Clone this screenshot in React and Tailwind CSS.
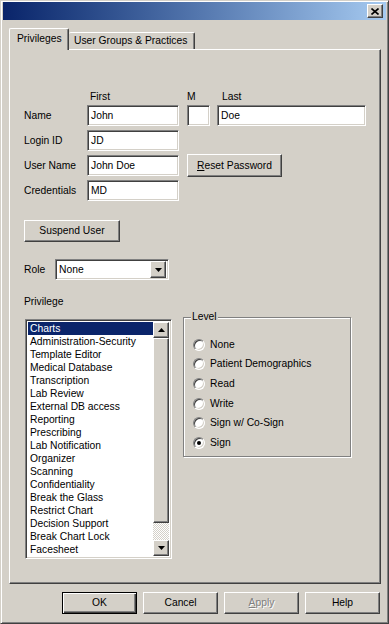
import React from "react";

const sunken =
  "bg-white border border-t-[#808080] border-l-[#808080] border-b-white border-r-white shadow-[inset_1px_1px_0_#404040,inset_-1px_-1px_0_#d4d0c8]";
const raised =
  "bg-[#d4d0c8] border border-t-white border-l-white border-r-[#404040] border-b-[#404040] shadow-[inset_-1px_-1px_0_#808080]";

function Field({ cls, children }) {
  return (
    <div className={`h-[21px] flex items-center pl-[3px] whitespace-nowrap overflow-hidden ${sunken} ${cls}`}>
      {children}
    </div>
  );
}

function Radio({ label, checked }) {
  return (
    <div className="flex items-center h-[19.6px]">
      <div className="w-[12px] h-[12px] rounded-full bg-white border border-t-[#808080] border-l-[#808080] border-b-white border-r-white shadow-[inset_1px_1px_0_#404040,inset_-1px_-1px_0_#d4d0c8] flex items-center justify-center">
        {checked && <div className="w-[4px] h-[4px] rounded-full bg-black" />}
      </div>
      <span className="ml-[5px]">{label}</span>
    </div>
  );
}

function ArrowBtn({ down, cls }) {
  return (
    <div className={`flex items-center justify-center ${raised} ${cls}`}>
      <svg width="7" height="4" viewBox="0 0 7 4">
        {down ? <polygon points="0,0 7,0 3.5,4" fill="#000" /> : <polygon points="0,4 7,4 3.5,0" fill="#000" />}
      </svg>
    </div>
  );
}

const items = [
  "Charts",
  "Administration-Security",
  "Template Editor",
  "Medical Database",
  "Transcription",
  "Lab Review",
  "External DB access",
  "Reporting",
  "Prescribing",
  "Lab Notification",
  "Organizer",
  "Scanning",
  "Confidentiality",
  "Break the Glass",
  "Restrict Chart",
  "Decision Support",
  "Break Chart Lock",
  "Facesheet",
  "Performance Measure Mgr",
];

export default function App() {
  return (
    <div className="w-[389px] h-[624px] bg-[#d4d0c8] border border-t-[#d4d0c8] border-l-[#d4d0c8] border-r-[#404040] border-b-[#404040] shadow-[inset_1px_1px_0_#fff,inset_-1px_-1px_0_#808080] pt-[1px] px-[2px] flex flex-col text-[10.3px] leading-[12px] text-black font-['Liberation_Sans',Arial,sans-serif]">
      {/* Title bar */}
      <div className="h-[18px] bg-gradient-to-r from-[#0a246a] to-[#a6caf0] flex items-center justify-end pr-[3px] shrink-0">
        <div className={`w-[16px] h-[14px] flex items-center justify-center ${raised}`}>
          <svg width="8" height="7" viewBox="0 0 8 7">
            <path d="M0.5 0.5 L7.5 6.5 M7.5 0.5 L0.5 6.5" stroke="#000" strokeWidth="1.6" />
          </svg>
        </div>
      </div>

      {/* Tabs */}
      <div className="mt-[8px] ml-[6px] h-[21px] flex items-end shrink-0">
        <div className="relative z-10 -mb-[1px] h-[22px] w-[60px] bg-[#d4d0c8] border-t border-l border-r border-t-white border-l-white border-r-[#404040] shadow-[inset_-1px_0_0_#808080] rounded-t-[2px] flex items-center pl-[7px] pb-[1px]">
          Privileges
        </div>
        <div className="h-[17px] w-[126px] border-t border-r border-t-white border-r-[#404040] shadow-[inset_-1px_0_0_#808080] rounded-t-[2px] flex items-center pl-[5px]">
          User Groups &amp; Practices
        </div>
      </div>

      {/* Panel */}
      <div className="ml-[6px] w-[372px] h-[535px] shrink-0 border border-t-white border-l-white border-r-[#404040] border-b-[#404040] shadow-[inset_-1px_-1px_0_#808080] pl-[14px] pt-[41px] flex flex-col">
        {/* header labels */}
        <div className="flex h-[12px] items-center">
          <div className="w-[66px]" />
          <div className="w-[97px]">First</div>
          <div className="w-[35px]">M</div>
          <div>Last</div>
        </div>
        {/* Name */}
        <div className="mt-[2px] flex items-center h-[21px]">
          <div className="w-[63px]">Name</div>
          <Field cls="w-[92px]">John</Field>
          <Field cls="w-[23px] ml-[8px]" />
          <Field cls="w-[149px] ml-[7px]">Doe</Field>
        </div>
        {/* Login ID */}
        <div className="mt-[4px] flex items-center h-[21px]">
          <div className="w-[63px]">Login ID</div>
          <Field cls="w-[92px]">JD</Field>
        </div>
        {/* User Name */}
        <div className="mt-[4px] flex items-center h-[21px]">
          <div className="w-[63px]">User Name</div>
          <Field cls="w-[92px]">John Doe</Field>
          <div className={`ml-[8px] w-[95px] h-[23px] flex items-center justify-center ${raised}`}>
            <span>
              <span className="underline">R</span>eset Password
            </span>
          </div>
        </div>
        {/* Credentials */}
        <div className="mt-[4px] flex items-center h-[21px]">
          <div className="w-[63px]">Credentials</div>
          <Field cls="w-[92px]">MD</Field>
        </div>

        {/* Suspend User */}
        <div className={`mt-[19px] w-[96px] h-[22px] flex items-center justify-center ${raised}`}>Suspend User</div>

        {/* Role */}
        <div className="mt-[17px] flex items-center h-[21px]">
          <div className="w-[31px]">Role</div>
          <div className={`w-[114px] h-[21px] flex items-center justify-between pl-[3px] pr-[2px] ${sunken}`}>
            <span>None</span>
            <ArrowBtn down cls="w-[16px] h-[17px]" />
          </div>
        </div>

        {/* Privilege label */}
        <div className="mt-[16px] h-[12px] flex items-center">Privilege</div>

        {/* List + Level */}
        <div className="mt-[3px] flex items-start">
          <div className={`mt-[8px] ml-[1px] w-[147px] h-[240px] flex p-[2px] ${sunken}`}>
            <div className="flex-1 min-w-0 h-full overflow-hidden">
              {items.map((it, i) => (
                <div
                  key={it}
                  className={`h-[13px] flex items-center pl-[2px] whitespace-nowrap ${i === 0 ? "bg-[#0a246a] text-white" : ""}`}
                >
                  {it}
                </div>
              ))}
            </div>
            <div className="w-[16px] h-full flex flex-col shrink-0">
              <ArrowBtn cls="w-[16px] h-[16px] shrink-0" />
              <div className={`w-[16px] h-[185px] shrink-0 ${raised}`} />
              <div className="flex-1 bg-[repeating-conic-gradient(#ffffff_0_25%,#d4d0c8_0_50%)] bg-size-[2px_2px]" />
              <ArrowBtn down cls="w-[16px] h-[16px] shrink-0" />
            </div>
          </div>

          <fieldset className="ml-[11px] w-[168px] min-w-0 border border-[#808080] shadow-[1px_1px_0_#fff,inset_1px_1px_0_#fff] px-[9px] pb-[3px]">
            <legend className="-ml-[2px] px-[1px] bg-[#d4d0c8] h-[12px] leading-[12px]">Level</legend>
            <div className="pt-[12px]">
              <Radio label="None" />
              <Radio label="Patient Demographics" />
              <Radio label="Read" />
              <Radio label="Write" />
              <Radio label="Sign w/ Co-Sign" />
              <Radio label="Sign" checked />
            </div>
          </fieldset>
        </div>
      </div>

      {/* Bottom buttons */}
      <div className="mt-[8px] flex justify-end gap-[6px] pr-[6px]">
        <div className="w-[75px] h-[22px] flex items-center justify-center bg-[#d4d0c8] border border-black shadow-[inset_1px_1px_0_#fff,inset_-1px_-1px_0_#404040,inset_-2px_-2px_0_#808080]">
          OK
        </div>
        <div className={`w-[75px] h-[22px] flex items-center justify-center ${raised}`}>Cancel</div>
        <div className={`w-[75px] h-[22px] flex items-center justify-center text-[#808080] [text-shadow:1px_1px_0_#fff] ${raised}`}>
          <span>
            <span className="underline">A</span>pply
          </span>
        </div>
        <div className={`w-[75px] h-[22px] flex items-center justify-center ${raised}`}>Help</div>
      </div>
    </div>
  );
}
